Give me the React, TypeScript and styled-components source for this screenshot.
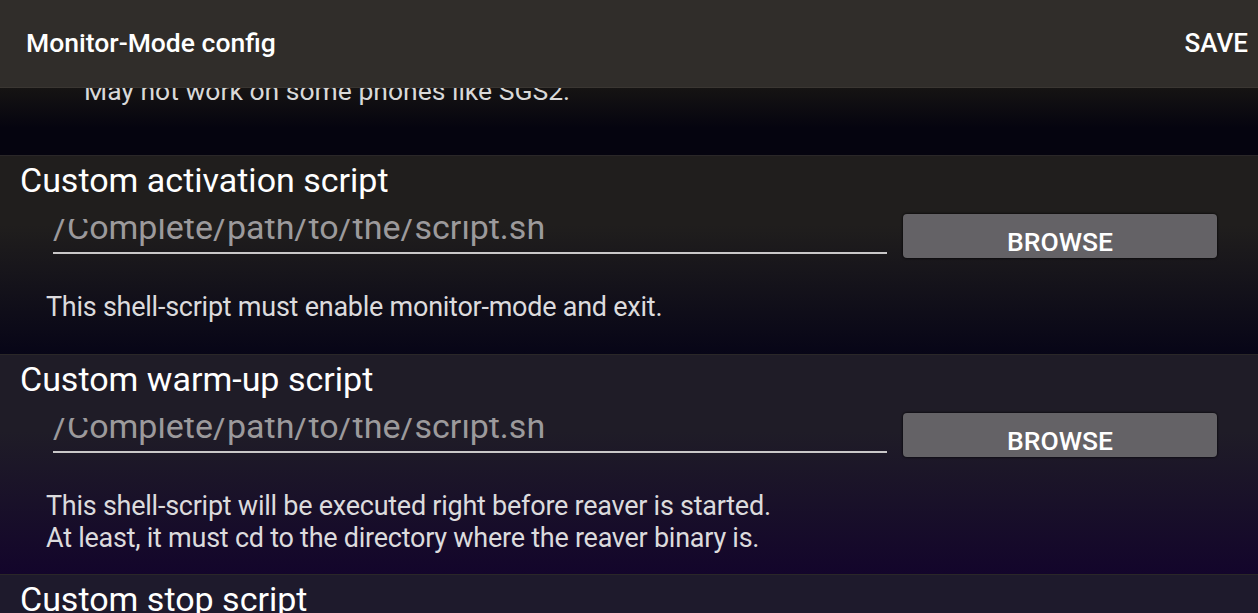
import styled, { createGlobalStyle } from "styled-components";

const GlobalStyle = createGlobalStyle`
    html, body {
        margin: 0;
        padding: 0;
        background: #0a0814;
        overflow: hidden;
    }
    body {
        font-family: Roboto, "Liberation Sans", sans-serif;
        color: #ffffff;
    }
`

const sections = [
    {
        title: "Custom activation script",
        hint: ["This shell-script must enable monitor-mode and exit."],
        top: "#201e1d",
        bottom: "#070517",
    },
    {
        title: "Custom warm-up script",
        hint: [
            "This shell-script will be executed right before reaver is started.",
            "At least, it must cd to the directory where the reaver binary is.",
        ],
        top: "#1f1c27",
        bottom: "#13052b",
    },
];

export default function App() {
    return (
        <Screen>
            <GlobalStyle/>
            <Toolbar>
                <ToolbarTitle>Monitor-Mode config</ToolbarTitle>
                <SaveBtn>SAVE</SaveBtn>
            </Toolbar>
            <Content>
                <Remnant>
                    <RemnantText>May not work on some phones like SGS2.</RemnantText>
                </Remnant>
                {sections.map((s) => (
                    <Section key={s.title} $top={s.top} $bottom={s.bottom}>
                        <SectionTitle>{s.title}</SectionTitle>
                        <PathRow>
                            <PathField>
                                <PathClip>
                                    <PathText>/Complete/path/to/the/script.sh</PathText>
                                </PathClip>
                            </PathField>
                            <BrowseBtn>BROWSE</BrowseBtn>
                        </PathRow>
                        <Hint>
                            {s.hint.map((line) => (
                                <div key={line}>{line}</div>
                            ))}
                        </Hint>
                    </Section>
                ))}
                <Section $top="#1e1a2c" $bottom="#1e1a2c">
                    <SectionTitle>Custom stop script</SectionTitle>
                </Section>
            </Content>
        </Screen>
    );
}

const Screen = styled.div`
    width: 1258px;
    height: 613px;
    overflow: hidden;
    display: flex;
    flex-direction: column;
`

const Toolbar = styled.div`
    height: 87px;
    flex-shrink: 0;
    background: #302d2a;
    display: flex;
    align-items: center;
    justify-content: space-between;
    padding: 0 10px 0 26px;
    box-sizing: border-box;
    box-shadow: 0 1px 0 #3a3632;
    position: relative;
    z-index: 1;
`

const ToolbarTitle = styled.div`
    font-size: 26.5px;
    font-weight: 500;
    margin-top: -2px;
`

const SaveBtn = styled.div`
    font-size: 26px;
    font-weight: 500;
    margin-top: -2px;
`

const Content = styled.div`
    display: flex;
    flex-direction: column;
`

const Remnant = styled.div`
    height: 68px;
    flex-shrink: 0;
    overflow: hidden;
    background: linear-gradient(#161413, #05040f 60%);
`

const RemnantText = styled.div`
    margin-top: -13px;
    padding-left: 84px;
    font-size: 26.5px;
    line-height: 34px;
    color: #d8d8d8;
`

const Section = styled.div<{ $top: string; $bottom: string }>`
    flex-shrink: 0;
    background: linear-gradient(${(p) => p.$top}, ${(p) => p.$top} 35%, ${(p) => p.$bottom});
    border-top: 1px solid #2a2728;
    padding-bottom: 20px;
`

const SectionTitle = styled.div`
    padding-left: 20px;
    padding-top: 4px;
    font-size: 34px;
    line-height: 40px;
    color: #ffffff;
`

const PathRow = styled.div`
    display: flex;
    align-items: flex-start;
    gap: 16px;
    margin-top: 14px;
    padding: 0 41px 0 53px;
`

const PathField = styled.div`
    flex: 1;
    height: 40px;
    box-sizing: border-box;
    padding-top: 5px;
    border-bottom: 2px solid #c9c7c8;
    display: flex;
    flex-direction: column;
`

const PathClip = styled.div`
    flex: 1;
    overflow: hidden;
`

const PathText = styled.div`
    margin-top: -9px;
    font-size: 34px;
    line-height: 34px;
    color: #9c9a9c;
    white-space: nowrap;
`

const BrowseBtn = styled.div`
    width: 314px;
    height: 44px;
    box-sizing: border-box;
    border-radius: 4px;
    background: #646266;
    box-shadow: 0 0 2px 1px rgba(0, 0, 0, 0.5);
    display: flex;
    align-items: center;
    justify-content: center;
    padding-top: 10px;
    font-size: 26.5px;
    font-weight: 500;
    color: #ffffff;
`

const Hint = styled.div`
    padding-left: 46px;
    margin-top: 33px;
    min-height: 43px;
    font-size: 27px;
    line-height: 32px;
    letter-spacing: -0.25px;
    color: #dcdbdd;
`
